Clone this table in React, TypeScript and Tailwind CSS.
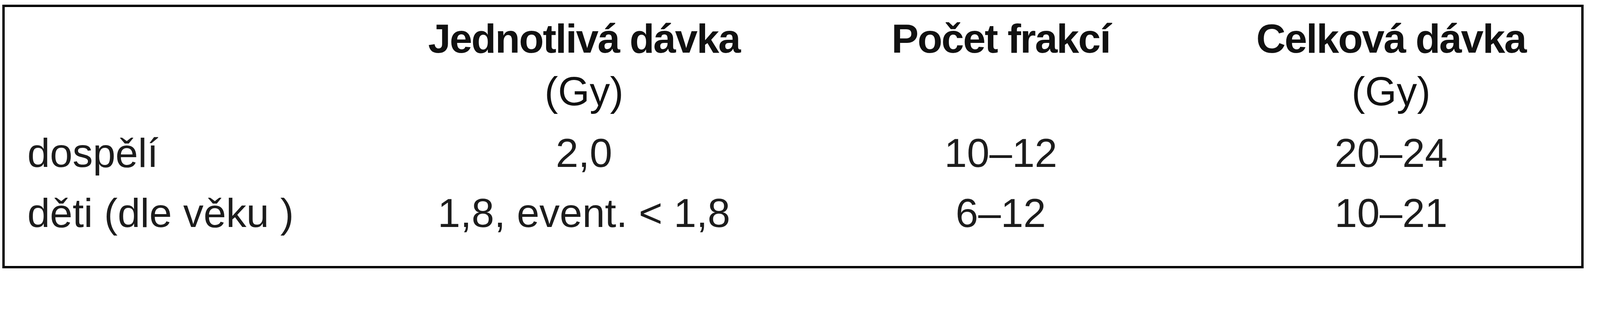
import React from 'react';

const rows = [
  { label: 'dospělí', dose: '2,0', fractions: '10–12', total: '20–24' },
  { label: 'děti (dle věku )', dose: '1,8, event. < 1,8', fractions: '6–12', total: '10–21' },
];

const cols = 'grid grid-cols-[974px_1018px_1116px_882px]';

export default function App() {
  return (
    <div className="w-full min-h-screen bg-white pt-[12px] pl-[6px] font-['Liberation_Sans',Arial,sans-serif] text-[104px] text-[#1c1c1c]">
      <div className="w-[4048px] border-[6px] border-black pt-[14px] pb-[59px]">
        {/* header */}
        <div className={`${cols} leading-[135px] font-bold tracking-[-2.5px] text-[#111] mb-[13px]`}>
          <div />
          <div className="text-center">
            Jednotlivá dávka
            <br />
            <span className="font-normal tracking-normal">(Gy)</span>
          </div>
          <div className="text-center">Počet frakcí</div>
          <div className="text-center">
            Celková dávka
            <br />
            <span className="font-normal tracking-normal">(Gy)</span>
          </div>
        </div>

        {rows.map((row) => (
          <div key={row.label} className={`${cols} leading-[154px]`}>
            <div className="pl-[58px] whitespace-nowrap">{row.label}</div>
            <div className="text-center whitespace-nowrap">{row.dose}</div>
            <div className="text-center whitespace-nowrap">{row.fractions}</div>
            <div className="text-center whitespace-nowrap">{row.total}</div>
          </div>
        ))}
      </div>
    </div>
  );
}
